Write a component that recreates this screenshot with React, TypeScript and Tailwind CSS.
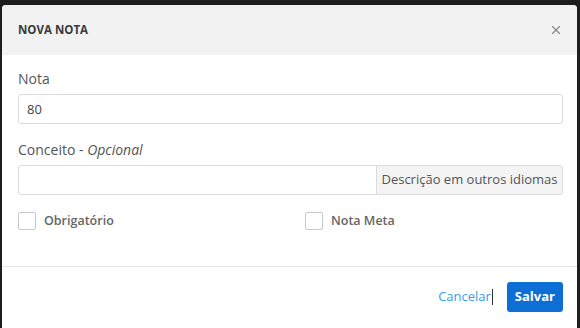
import { X } from 'lucide-react';

export default function App() {
  return (
    <div className="h-[328px] w-[580px] overflow-hidden bg-[#1e1e1e] pl-[2px] pr-[3px] pt-[5px] font-['Open_Sans',sans-serif]">
      <div className="flex h-[330px] flex-col rounded-t-[4px] bg-white">
        {/* header */}
        <div className="flex h-[50px] items-center justify-between rounded-t-[4px] bg-[#f2f2f2] pl-[16px] pr-[14px]">
          <h2 className="text-[11.5px] font-bold text-[#3a3a3a]">NOVA NOTA</h2>
          <button className="text-[#8a8a8a]">
            <X size={14} strokeWidth={2} />
          </button>
        </div>

        {/* body */}
        <div className="flex flex-col pl-[16px] pr-[14px] pt-[14px]">
          <label className="text-[14px] leading-[20px] text-[#555]">Nota</label>
          <input
            defaultValue="80"
            className="mt-[5px] h-[30px] w-full rounded-[3px] border border-[#dcdcdc] px-[8px] text-[13px] text-[#444] outline-none"
          />

          <label className="mt-[16px] text-[14px] leading-[20px] text-[#555]">
            Conceito - <span className="italic">Opcional</span>
          </label>
          <div className="mt-[5px] flex h-[30px] w-full">
            <input className="h-full flex-1 rounded-l-[3px] border border-[#dcdcdc] px-[8px] text-[13px] outline-none" />
            <button className="h-full w-[186px] rounded-r-[3px] border border-l-0 border-[#dcdcdc] bg-[#f4f4f4] text-[13px] text-[#555]">
              Descrição em outros idiomas
            </button>
          </div>

          <div className="mt-[17px] flex h-[18px] items-center">
            <label className="flex w-[287px] items-center gap-[8px]">
              <span className="h-[18px] w-[18px] rounded-[2px] border border-[#c8c8c8] bg-white" />
              <span className="text-[12.5px] font-semibold text-[#666]">Obrigatório</span>
            </label>
            <label className="flex items-center gap-[8px]">
              <span className="h-[18px] w-[18px] rounded-[2px] border border-[#c8c8c8] bg-white" />
              <span className="text-[12.5px] font-semibold text-[#666]">Nota Meta</span>
            </label>
          </div>
        </div>

        {/* footer */}
        <div className="mt-[36px] border-t border-[#e6e6e6]">
          <div className="flex items-center justify-end gap-[14px] pr-[14px] pt-[15px]">
            <span className="flex items-center">
              <a className="text-[13px] text-[#3d9ee3]">Cancelar</a>
              <span className="ml-[1px] h-[16px] w-[1px] bg-[#333]" />
            </span>
            <button className="h-[30px] rounded-[3px] bg-[#0d6fd6] px-[8px] text-[13px] font-bold text-white">
              Salvar
            </button>
          </div>
        </div>
      </div>
    </div>
  );
}
